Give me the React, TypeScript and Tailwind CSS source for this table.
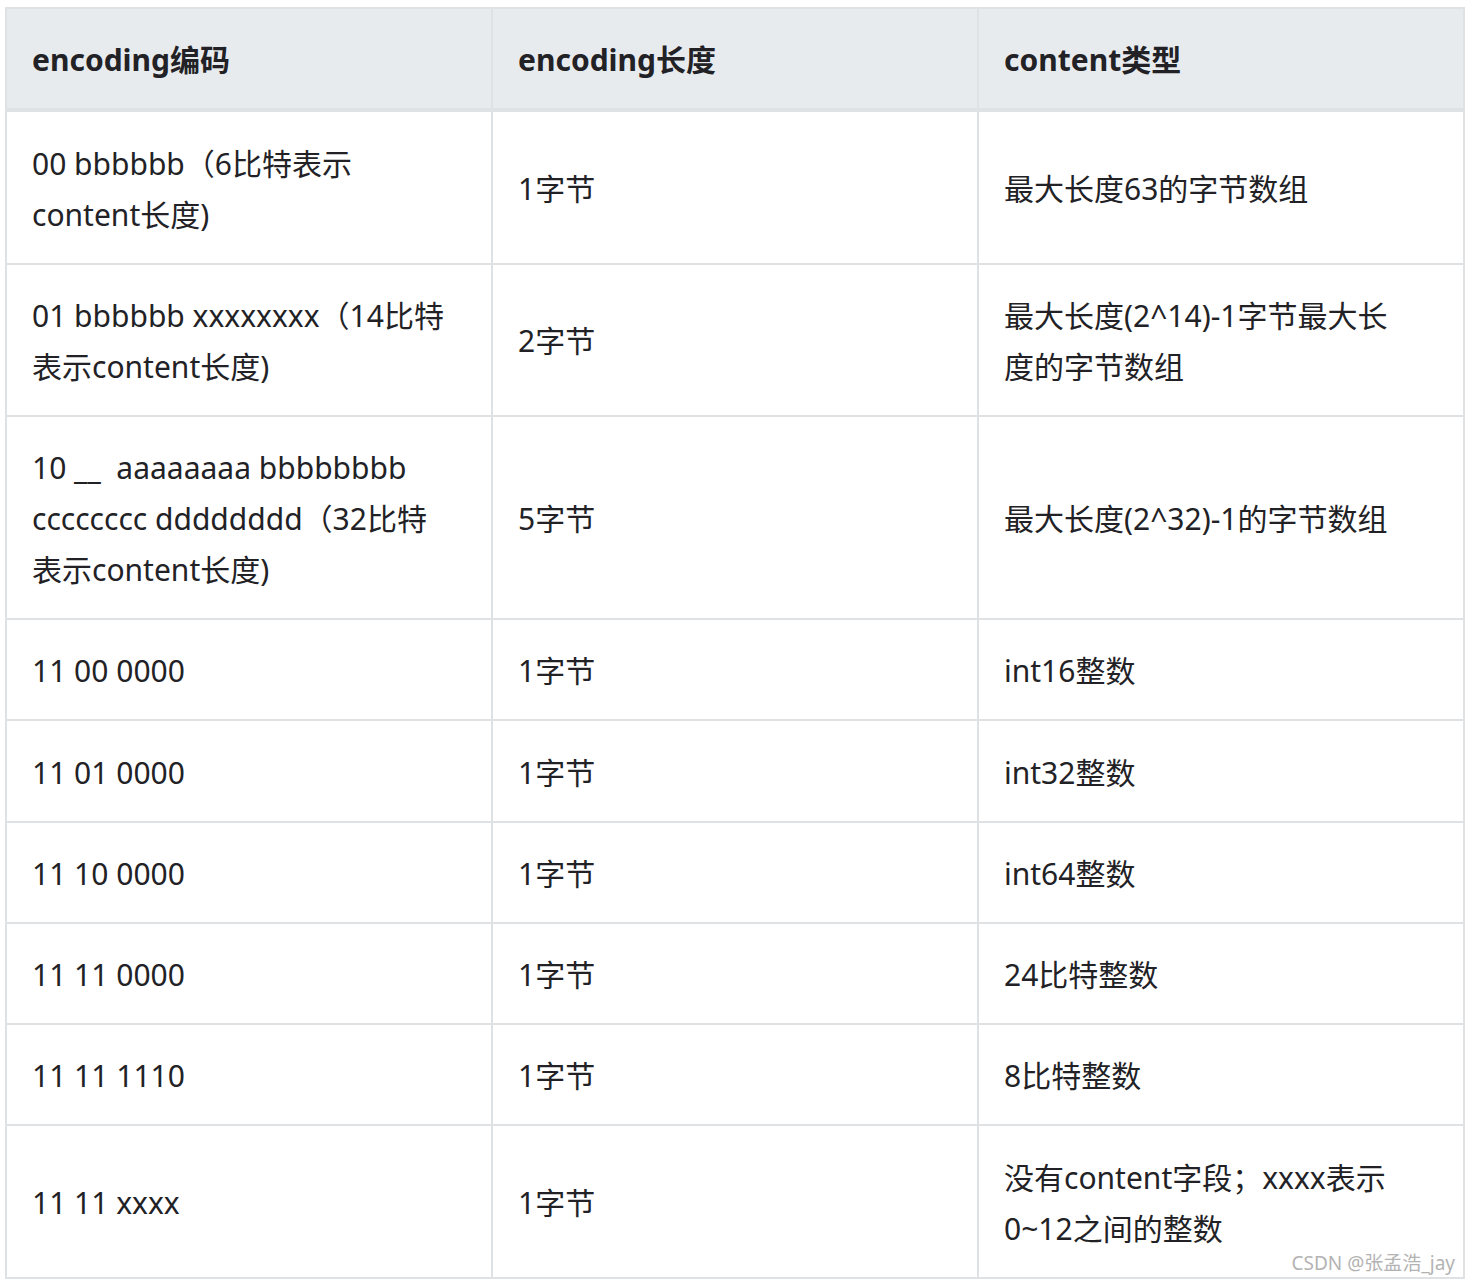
import React from 'react';

type Row = { enc: React.ReactNode; len: string; type: React.ReactNode };

const rows: Row[] = [
  { enc: <>00 bbbbbb（6比特表示<br />content长度)</>, len: '1字节', type: '最大长度63的字节数组' },
  {
    enc: <>01 bbbbbb xxxxxxxx（14比特<br />表示content长度)</>,
    len: '2字节',
    type: <>最大长度(2^14)-1字节最大长<br />度的字节数组</>,
  },
  {
    enc: <>10 __ &nbsp;aaaaaaaa bbbbbbbb<br />cccccccc dddddddd（32比特<br />表示content长度)</>,
    len: '5字节',
    type: '最大长度(2^32)-1的字节数组',
  },
  { enc: '11 00 0000', len: '1字节', type: 'int16整数' },
  { enc: '11 01 0000', len: '1字节', type: 'int32整数' },
  { enc: '11 10 0000', len: '1字节', type: 'int64整数' },
  { enc: '11 11 0000', len: '1字节', type: '24比特整数' },
  { enc: '11 11 1110', len: '1字节', type: '8比特整数' },
  { enc: '11 11 xxxx', len: '1字节', type: <>没有content字段；xxxx表示<br />0~12之间的整数</> },
];

const cell = 'border-2 border-[#dfe2e5] px-[25px] pt-[25.25px] pb-[23px] align-middle whitespace-nowrap';

export default function App() {
  return (
    <div
      className="relative h-[1284px] w-[1470px] bg-white pl-[5px] pt-[7px] text-[#222226]"
      style={{ fontFamily: '"Noto Sans", "Noto Sans CJK SC", sans-serif' }}
    >
      <table className="w-[1460px] table-fixed border-collapse text-[30px] leading-[51px]">
        <thead>
          <tr className="bg-[#e8ebee]">
            <th className={`${cell} border-b-[4px] text-left font-bold`}>encoding编码</th>
            <th className={`${cell} border-b-[4px] text-left font-bold`}>encoding长度</th>
            <th className={`${cell} border-b-[4px] text-left font-bold`}>content类型</th>
          </tr>
        </thead>
        <tbody>
          {rows.map((r, i) => (
            <tr key={i}>
              <td className={cell}>{r.enc}</td>
              <td className={cell}>{r.len}</td>
              <td className={cell}>{r.type}</td>
            </tr>
          ))}
        </tbody>
      </table>
      <div className="absolute right-[15px] top-[1249px] text-[19px] leading-[28px] text-[#b3b3b3]">
        CSDN @张孟浩_jay
      </div>
    </div>
  );
}
